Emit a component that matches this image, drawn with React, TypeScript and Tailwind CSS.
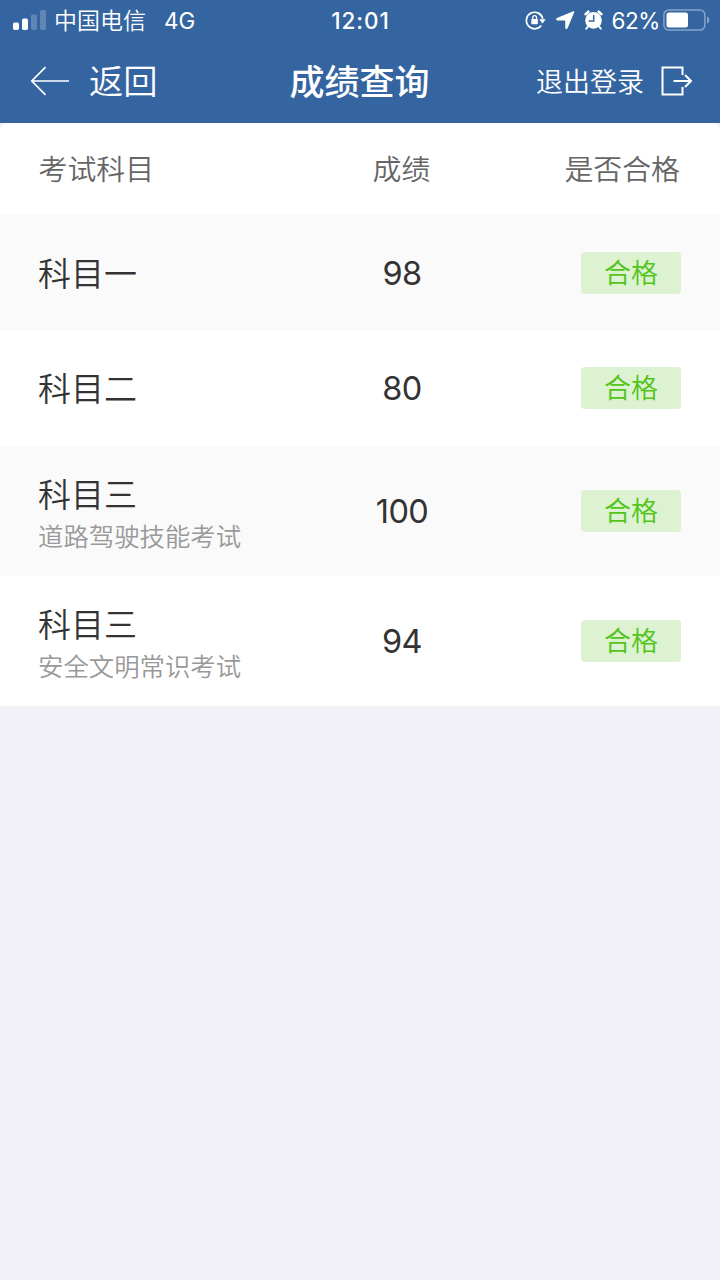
import React from "react";

type Result = { subject: string; detail?: string; score: number; status: string };

const results: Result[] = [
  { subject: "科目一", score: 98, status: "合格" },
  { subject: "科目二", score: 80, status: "合格" },
  { subject: "科目三", detail: "道路驾驶技能考试", score: 100, status: "合格" },
  { subject: "科目三", detail: "安全文明常识考试", score: 94, status: "合格" },
];

function SignalIcon() {
  return (
    <svg className="h-5 w-[33px] shrink-0" viewBox="0 0 33 20" fill="#fff">
      <rect x="0" y="12.500" width="6" height="7.500" rx="1.8" />
      <rect x="9" y="8.500" width="6" height="11.500" rx="1.8" />
      <rect x="18" y="4.500" width="6" height="15.500" rx="1.8" opacity="0.22" />
      <rect x="27" y="0" width="6" height="20" rx="1.8" opacity="0.22" />
    </svg>
  );
}

function RotationLockIcon() {
  return (
    <svg className="h-5 w-[21px]" viewBox="0 0 21 20" fill="none" stroke="#fff" strokeWidth="1.7">
      <path d="M16.300 15.600A8.300 8.300 0 1 1 17.800 8.800" />
      <path d="M14.200 9.300h6.600l-3.300 4.200z" fill="#fff" stroke="none" />
      <rect x="6.300" y="9" width="6.600" height="5.200" rx="0.6" fill="#fff" stroke="none" />
      <path d="M7.700 9.200V7.500a1.900 1.900 0 0 1 3.800 0v1.700" strokeWidth="1.300" />
    </svg>
  );
}

function LocationIcon() {
  return (
    <svg className="h-[18px] w-[19px]" viewBox="0 0 19 18" fill="#fff">
      <path d="M17.300 0.300 0.900 7.100c-1 .5-.8 2.200.3 2.300l8 .1.100 7.400c0 1.200 1.800 1.300 2.300.3L18.200 1.200c.3-.7-.2-1.200-.9-.9z" />
    </svg>
  );
}

function AlarmIcon() {
  return (
    <svg className="h-5 w-[19px]" viewBox="0 0 19 20" fill="none" stroke="#fff" strokeLinecap="round">
      <path d="M1.600 4.200 4.300 1.700M17.400 4.200l-2.700-2.500" strokeWidth="2.600" />
      <path d="m3.800 16.600-1.600 2.200M15.200 16.600l1.600 2.200" strokeWidth="1.900" />
      <circle cx="9.500" cy="10.400" r="8.300" fill="#fff" stroke="none" />
      <path d="M9.700 5.600v5.400H5.200" stroke="#3565a0" strokeWidth="1.500" />
    </svg>
  );
}

function BatteryIcon() {
  return (
    <svg className="h-[22px] w-[47px]" viewBox="0 0 47 22" fill="none">
      <rect x="0.900" y="0.900" width="41" height="20.200" rx="5" stroke="#86a3ca" strokeWidth="1.500" />
      <rect x="3.500" y="3.500" width="21.500" height="15" rx="2.500" fill="#fff" />
      <path d="M44 7.500c3.200 1.300 3.200 5.700 0 7z" fill="#86a3ca" />
    </svg>
  );
}

function BackArrow() {
  return (
    <svg className="h-[30px] w-10 shrink-0" viewBox="0 0 40 30" fill="none" stroke="#fff" strokeWidth="1.700">
      <path d="M39 15H2M15.500 1.200 1.800 15l13.700 13.800" />
    </svg>
  );
}

function LogoutIcon() {
  return (
    <svg className="h-[30px] w-8 shrink-0" viewBox="0 0 32 30" fill="none" stroke="#fff" strokeWidth="2">
      <path d="M21.500 9V1.500H1.500v27h20V21M12.500 15h17M24 9l6 6-6 6" />
    </svg>
  );
}

function StatusBar() {
  return (
    <div className="flex h-10 items-center text-[23px] leading-10">
      <div className="flex flex-1 items-center pl-[13px]">
        <SignalIcon />
        <span className="ml-2 pt-0.5 leading-[38px] font-[350]">中国电信</span>
        <span className="ml-[18px] pt-px text-[22.500px] leading-[39px]">4G</span>
      </div>
      <div className="pt-px pr-0.5 text-[22.500px] leading-[39px] font-medium tracking-[0.9px]">12:01</div>
      <div className="flex flex-1 items-center justify-end pr-[10px]">
        <RotationLockIcon />
        <span className="ml-[10px]"><LocationIcon /></span>
        <span className="ml-[9px]"><AlarmIcon /></span>
        <span className="ml-2 pt-px text-[22.500px] leading-[39px] tracking-[-0.4px]">62%</span>
        <span className="ml-[3px]"><BatteryIcon /></span>
      </div>
    </div>
  );
}

function NavBar() {
  return (
    <nav className="flex h-[81px] items-center">
      <button className="flex flex-1 items-center pl-[30px]">
        <BackArrow />
        <span className="ml-[19px] pt-0.5 text-[34.300px] leading-[50px] font-[350]">返回</span>
      </button>
      <h1 className="pt-0.5 pr-1 text-[35px] leading-[50px] font-medium">成绩查询</h1>
      <button className="flex flex-1 items-center justify-end pr-[27px]">
        <span className="pt-1 text-[27px] leading-10 font-[350]">退出登录</span>
        <span className="ml-[17px]"><LogoutIcon /></span>
      </button>
    </nav>
  );
}

function ResultRow({ subject, detail, score, status }: Result) {
  return (
    <div className={`flex items-center pr-[39px] pl-[38px] odd:bg-[#fafafa] even:bg-white ${detail ? "h-[130px]" : "h-[115.500px]"}`}>
      <div className={`w-[244px] ${detail ? "pt-[5px]" : "pt-0.5"}`}>
        <div className="text-[33px] leading-[46px] font-[350] text-[#333]">{subject}</div>
        {detail && <div className="text-[25.400px] leading-[38px] font-[350] text-[#999]">{detail}</div>}
      </div>
      <div className="w-60 pt-0.5 text-center text-[32.500px] leading-[46px] tracking-[-0.6px] text-[#333]">{score}</div>
      <div className="flex flex-1 justify-end">
        <span className="h-[42px] w-[100px] rounded bg-[#dcf2d0] text-center text-[27px] leading-[44px] font-[350] text-[#52c41a]">{status}</span>
      </div>
    </div>
  );
}

export default function App() {
  return (
    <div className="min-h-screen w-full bg-[#f1f1f7] font-['Inter','Noto_Sans_CJK_SC',sans-serif]">
      <header className="h-[123px] bg-[#3565a0] text-white">
        <StatusBar />
        <NavBar />
      </header>
      <main className="overflow-hidden rounded-t-lg bg-white">
        <div className="flex h-[92px] items-center pt-0.5 pr-10 pl-[38.500px] text-[28.900px] leading-10 font-[350] text-[#666]">
          <div className="w-[243px]">考试科目</div>
          <div className="w-60 text-center">成绩</div>
          <div className="flex-1 text-right">是否合格</div>
        </div>
        <div>
          {results.map((result, index) => (
            <ResultRow key={index} {...result} />
          ))}
        </div>
      </main>
    </div>
  );
}
